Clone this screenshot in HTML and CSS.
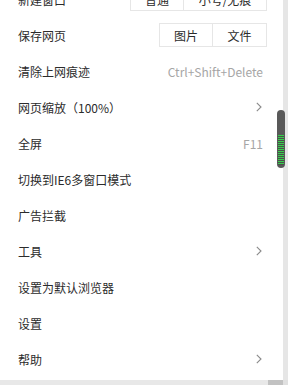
FILE: index.html
```html
<!DOCTYPE html>
<html>
	<head>
		<meta charset="UTF-8">
		<title>菜单</title>
		<link rel="stylesheet" href="styles.css">
	</head>
	<body>
		<div class="frame">
			<div class="view">
				<ul class="menu">
					<li class="item">
						<span>新建窗口</span>
						<div class="btns"><a href="javascript:;" class="w53">普通</a><a href="javascript:;" class="w83">小号/无痕</a></div>
					</li>
					<li class="item">
						<span>保存网页</span>
						<div class="btns"><a href="javascript:;" class="w53">图片</a><a href="javascript:;" class="w54">文件</a></div>
					</li>
					<li class="item"><span>清除上网痕迹</span><em>Ctrl+Shift+Delete</em></li>
					<li class="item"><span>网页缩放（100%）</span><i class="arr"><svg width="6" height="10" viewBox="0 0 6 10"><path d="M0.8 0.8 L5 5 L0.8 9.2" fill="none" stroke="#8a8a8a" stroke-width="1.1"/></svg></i></li>
					<li class="item"><span>全屏</span><em>F11</em></li>
					<li class="item"><span>切换到IE6多窗口模式</span></li>
					<li class="item"><span>广告拦截</span></li>
					<li class="item"><span>工具</span><i class="arr"><svg width="6" height="10" viewBox="0 0 6 10"><path d="M0.8 0.8 L5 5 L0.8 9.2" fill="none" stroke="#8a8a8a" stroke-width="1.1"/></svg></i></li>
					<li class="item"><span>设置为默认浏览器</span></li>
					<li class="item"><span>设置</span></li>
					<li class="item"><span>帮助</span><i class="arr"><svg width="6" height="10" viewBox="0 0 6 10"><path d="M0.8 0.8 L5 5 L0.8 9.2" fill="none" stroke="#8a8a8a" stroke-width="1.1"/></svg></i></li>
				</ul>
				<div class="vbar"></div>
				<div class="thumb"><div class="grip"></div></div>
			</div>
			<div class="hbar"><div class="corner"></div></div>
		</div>
	</body>
</html>
```

FILE: styles.css
```css
*{
	padding: 0px;margin:0px;
}
body{
	font-family: "Noto Sans CJK SC", "Noto Sans", sans-serif;
	font-size: 12px;
	color: #2b2b2b;
	background: #fff;
	overflow: hidden;
}
ul{
	list-style: none;
}
.frame{
	width: 288px;height: 385px;
	display: flex;flex-direction: column;
}
.view{
	height: 380px;
	display: flex;
	position: relative;
	overflow: hidden;
}
.menu{
	width: 283px;
	margin-top: -19px;
	background: #fff;
}
.item{
	height: 36px;
	padding: 0 20px 0 18px;
	display: flex;align-items: center;justify-content: space-between;
}
.item em{
	font-style: normal;
	color: #a6a6a6;
}
.arr{
	display: flex;
	margin-right: 1px;
}
.btns{
	display: flex;
	border: 1px solid #e6e6e6;
	height: 22px;
	margin-right: -4px;
}
.btns a{
	display: flex;align-items: center;justify-content: center;
	color: #2b2b2b;text-decoration: none;
	height: 22px;
}
.btns a + a{
	border-left: 1px solid #e6e6e6;
}
.w53{width: 52px;}
.w54{width: 53px;}
.w83{width: 82px;}
.vbar{
	width: 5px;
	background: #e6e6e6;
}
.thumb{
	position: absolute;
	left: 277px;top: 110px;
	width: 8px;height: 58px;
	border-radius: 4px;
	background: #595959;
}
.grip{
	position: absolute;
	left: 1px;top: 25px;
	width: 6px;height: 30px;
	background: repeating-linear-gradient(#36d24c 0px, #36d24c 1px, #4d4d4d 1px, #4d4d4d 2px);
}
.hbar{
	height: 5px;
	background: #e8e8e8;
	display: flex;justify-content: flex-end;
}
.corner{
	width: 15px;
	background: #c2c2c2;
	border-right: 5px solid #e0e0e0;
}
```
